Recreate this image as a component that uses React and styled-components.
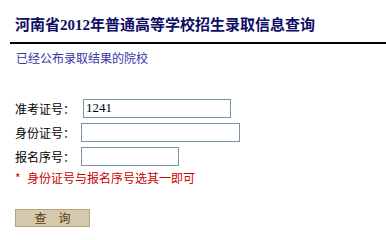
import React, { useState } from 'react'
import styled, { createGlobalStyle } from 'styled-components'

const GlobalStyle = createGlobalStyle`
  body {
    margin: 0;
    background: #ffffff;
    font-family: "Noto Sans CJK SC", "Liberation Sans", sans-serif;
  }
`

const Page = styled.div`
  width: 386px;
  height: 237px;
  overflow: hidden;
`

const Header = styled.div`
  margin-left: 10px;
  padding: 16px 0 8px 5px;
  border-bottom: 2px solid #000;
`

const Title = styled.h1`
  margin: 0;
  font-family: "Liberation Serif", "Noto Sans CJK SC", serif;
  font-size: 15px;
  line-height: 18px;
  font-weight: 700;
  color: #0d0d66;
`

const Subtitle = styled.div`
  margin: 7px 0 0 16px;
  font-size: 12px;
  line-height: 14px;
  color: #3535a6;
`

const Form = styled.form`
  margin: 31px 0 0 15px;
  display: flex;
  flex-direction: column;
`

const Row = styled.div`
  display: flex;
  align-items: center;
  height: 24px;
`

const Label = styled.span`
  width: 66px;
  font-size: 12px;
  color: #000;
  white-space: nowrap;
`

const Input = styled.input`
  box-sizing: border-box;
  width: ${p => p.$w}px;
  height: 19px;
  margin: 0 0 0 ${p => p.$shift || 0}px;
  padding: 0 2px;
  border: 1px solid #7497a4;
  font-family: "Liberation Serif", serif;
  font-size: 13px;
  color: #000;
  outline: none;
`

const Note = styled.div`
  margin-top: 2px;
  display: flex;
  align-items: center;
  font-size: 12px;
  line-height: 16px;
  color: #cc0000;
  white-space: nowrap;
`

const Star = styled.span`
  width: 12px;
`

const Button = styled.button`
  box-sizing: border-box;
  width: 75px;
  height: 18px;
  margin-top: 23px;
  padding: 0;
  background: #d5caae;
  border: 1px solid #b3a584;
  font-family: "Noto Sans CJK SC", sans-serif;
  font-size: 12px;
  line-height: 16px;
  color: #5a3a12;
  letter-spacing: 12px;
  text-indent: 12px;
  cursor: pointer;
`

const App = () => {
  const [ticket, setTicket] = useState("1241")
  const [idCard, setIdCard] = useState("")
  const [regNo, setRegNo] = useState("")

  return (
    <Page>
      <GlobalStyle />
      <Header>
        <Title>河南省2012年普通高等学校招生录取信息查询</Title>
      </Header>
      <Subtitle>已经公布录取结果的院校</Subtitle>
      <Form onSubmit={(e) => e.preventDefault()}>
        <Row>
          <Label>准考证号：</Label>
          <Input $w={148} $shift={2} value={ticket} onChange={(e) => setTicket(e.target.value)} />
        </Row>
        <Row>
          <Label>身份证号：</Label>
          <Input $w={159} value={idCard} onChange={(e) => setIdCard(e.target.value)} />
        </Row>
        <Row>
          <Label>报名序号：</Label>
          <Input $w={98} value={regNo} onChange={(e) => setRegNo(e.target.value)} />
        </Row>
        <Note>
          <Star>*</Star>
          身份证号与报名序号选其一即可
        </Note>
        <div>
          <Button type="submit">查询</Button>
        </div>
      </Form>
    </Page>
  )
}

export default App
